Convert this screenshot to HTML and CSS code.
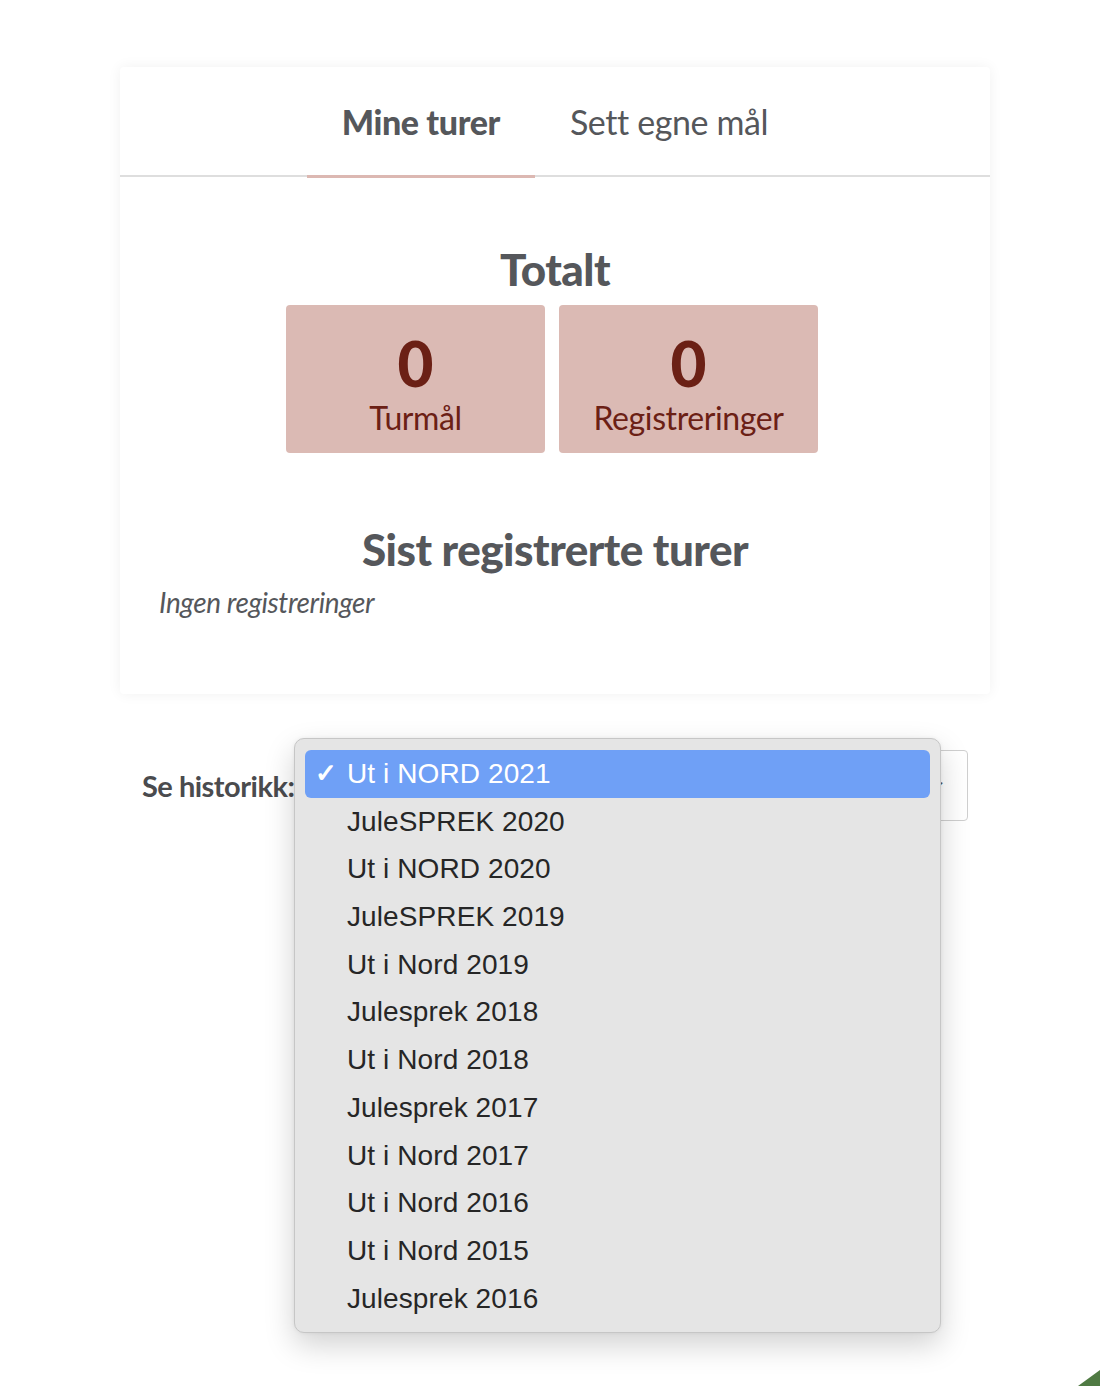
FILE: index.html
```html
<!DOCTYPE html>
<html lang="no">
<head>
<meta charset="utf-8">
<title>Mine turer</title>
<link rel="stylesheet" href="styles.css">
</head>
<body>
<div class="page">
  <section class="card">
    <nav class="tabs">
      <div class="tab active">Mine turer</div>
      <div class="tab">Sett egne mål</div>
    </nav>
    <div class="card-body">
      <h2 class="heading">Totalt</h2>
      <div class="stats">
        <div class="stat"><div class="stat-num">0</div><div class="stat-label">Turmål</div></div>
        <div class="stat"><div class="stat-num">0</div><div class="stat-label">Registreringer</div></div>
      </div>
      <h2 class="heading heading-sist">Sist registrerte turer</h2>
      <p class="empty">Ingen registreringer</p>
    </div>
  </section>

  <div class="history">
    <label class="history-label">Se historikk:</label>
    <div class="select-wrap">
      <div class="select"><span class="select-arrow">⌄</span></div>
      <ul class="menu">
        <li class="item selected"><span class="check">✓</span>Ut i NORD 2021</li>
        <li class="item">JuleSPREK 2020</li>
        <li class="item">Ut i NORD 2020</li>
        <li class="item">JuleSPREK 2019</li>
        <li class="item">Ut i Nord 2019</li>
        <li class="item">Julesprek 2018</li>
        <li class="item">Ut i Nord 2018</li>
        <li class="item">Julesprek 2017</li>
        <li class="item">Ut i Nord 2017</li>
        <li class="item">Ut i Nord 2016</li>
        <li class="item">Ut i Nord 2015</li>
        <li class="item">Julesprek 2016</li>
      </ul>
    </div>
  </div>
</div>
<div class="corner"></div>
</body>
</html>
```

FILE: styles.css
```css
html, body {
  margin: 0;
  padding: 0;
  background: #ffffff;
}
body {
  font-family: "Lato", "Open Sans", sans-serif;
  color: #55575b;
  width: 1100px;
  height: 1386px;
  overflow: hidden;
  position: relative;
}
.page {
  padding-top: 67px;
  padding-left: 120px;
}
.card {
  width: 870px;
  background: #fff;
  border-radius: 4px;
  box-shadow: 0 0 14px rgba(0,0,0,0.06);
}
.tabs {
  display: flex;
  justify-content: center;
  border-bottom: 2px solid #dedede;
  height: 108px;
}
.tab {
  padding: 0 35px;
  font-size: 34px;
  line-height: 110px;
  color: #55575b;
  letter-spacing: -0.4px;
  position: relative;
}
.tab.active {
  font-weight: 900;
}
.tab.active::after {
  content: "";
  position: absolute;
  left: 0;
  right: 0;
  bottom: -3px;
  height: 3px;
  background: #dcb8b2;
}
.card-body {
  padding: 66px 0 77px;
}
.heading {
  margin: 0;
  text-align: center;
  font-size: 44px;
  font-weight: 900;
  line-height: 52px;
  color: #55575b;
  letter-spacing: -0.5px;
}
.stats {
  display: flex;
  justify-content: center;
  gap: 14px;
  margin-top: 10px;
  padding-right: 6px;
}
.stat {
  width: 259px;
  height: 148px;
  background: #dbbab4;
  border-radius: 4px;
  text-align: center;
  color: #6b2015;
}
.stat-num {
  font-size: 62px;
  font-weight: 900;
  line-height: 62px;
  padding-top: 27px;
}
.stat-label {
  font-size: 32px;
  line-height: 40px;
  padding-top: 4px;
  letter-spacing: -0.4px;
}
.heading-sist {
  margin-top: 70px;
}
.empty {
  margin: 12px 0 0 39px;
  font-style: italic;
  font-size: 28px;
  line-height: 30px;
  color: #55575b;
  letter-spacing: -0.4px;
}
.history {
  display: flex;
  align-items: center;
  margin-top: 56px;
  margin-left: 22px;
  height: 71px;
}
.history-label {
  font-weight: 700;
  font-size: 29px;
  color: #4a4b4e;
  letter-spacing: -0.5px;
  width: 158px;
  flex: none;
  white-space: nowrap;
}
.select-wrap {
  position: relative;
  width: 668px;
  height: 71px;
}
.select {
  height: 69px;
  border: 1px solid #cfcfcf;
  border-radius: 4px;
  background: #fff;
  position: relative;
}
.select-arrow {
  position: absolute;
  right: 20px;
  top: 16px;
  font-size: 20px;
  color: #555;
}
.menu {
  position: absolute;
  left: -6px;
  top: -12px;
  width: 625px;
  margin: 0;
  padding: 11px 10px 10px;
  list-style: none;
  background: #e5e5e5;
  border: 1px solid #c6c6c6;
  border-radius: 10px;
  box-shadow: 0 12px 30px rgba(0,0,0,0.18), 0 0 4px rgba(0,0,0,0.06);
  font-family: "Liberation Sans", Arial, sans-serif;
}
.item {
  height: 47.7px;
  line-height: 47.7px;
  padding-left: 42px;
  font-size: 28px;
  color: #262626;
  border-radius: 6px;
  position: relative;
  letter-spacing: 0.1px;
}
.item.selected {
  background: #6fa0f6;
  color: #ffffff;
}
.check {
  position: absolute;
  left: 10px;
  top: 0;
  font-size: 26px;
  font-weight: 700;
}
.corner {
  position: absolute;
  right: 0;
  bottom: 0;
  width: 0;
  height: 0;
  border-style: solid;
  border-width: 0 0 16px 22px;
  border-color: transparent transparent #4f7a43 transparent;
}
```
